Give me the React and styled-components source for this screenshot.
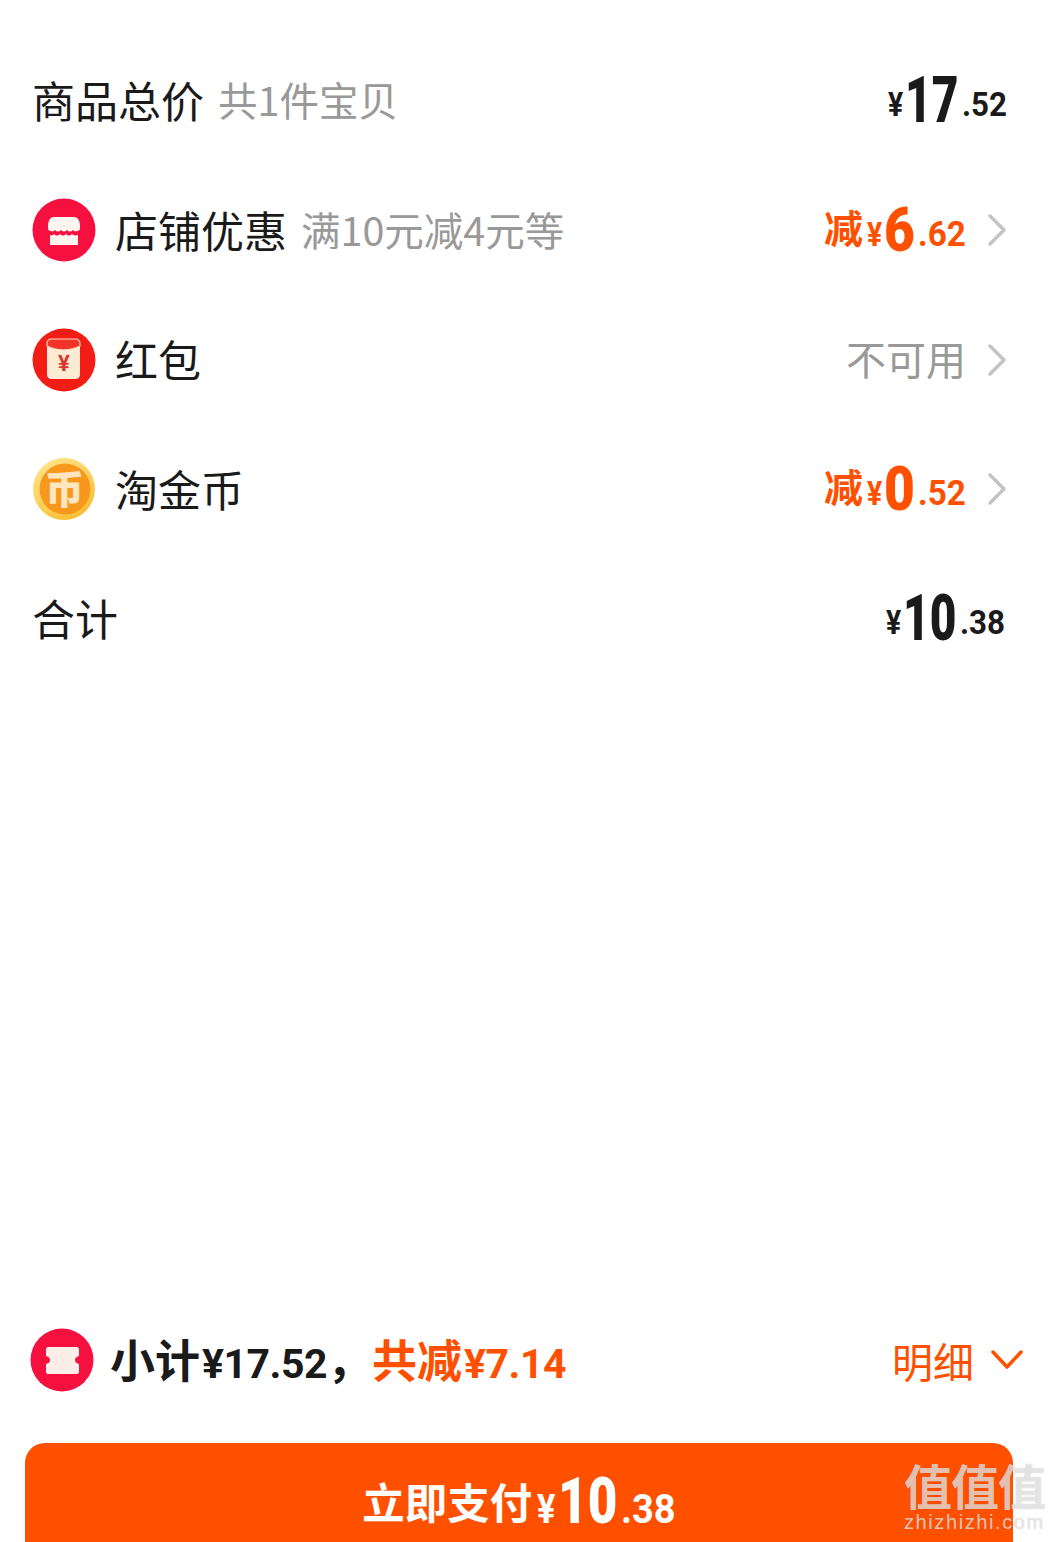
import React from 'react';
import styled, { createGlobalStyle } from 'styled-components';

const ORANGE = '#ff5000';
const INK = '#1a1a1a';
const GRAY = '#999999';
const CJK = '"Noto Sans CJK SC", "Noto Sans", sans-serif';
const NUM = 'Roboto, "Noto Sans CJK SC", sans-serif';

const GlobalStyle = createGlobalStyle`
  html, body {
    margin: 0;
    padding: 0;
    background: #fff;
    font-family: ${CJK};
  }
`;

const Page = styled.div`
  position: relative;
  width: 1055px;
  height: 1542px;
  overflow: hidden;
  display: flex;
  flex-direction: column;
  background: #fff;
`;

const List = styled.div`
  display: flex;
  flex-direction: column;
  padding: 36px 48px 0 32px;
`;

const Row = styled.div`
  height: 129.5px;
  display: flex;
  align-items: center;
  justify-content: space-between;
`;

const Left = styled.div`
  display: flex;
  align-items: center;
`;

const Right = styled.div`
  display: flex;
  align-items: center;
  margin-right: ${(p) => p.$inset || 0}px;
`;

const IconWrap = styled.div`
  width: 64px;
  height: 64px;
  margin-right: ${(p) => p.$gap || 19}px;
  flex: none;
  display: flex;
`;

const Label = styled.span`
  font-size: 43px;
  line-height: 56px;
  padding-bottom: 3px;
  color: ${INK};
`;

const Hint = styled.span`
  font-size: 39.5px;
  line-height: 56px;
  padding-bottom: 3px;
  color: ${GRAY};
  margin-left: 14px;
`;

const Muted = styled.span`
  font-size: 40px;
  line-height: 56px;
  padding-bottom: 3px;
  color: ${GRAY};
`;

const Price = styled.div`
  display: flex;
  align-items: baseline;
  font-family: ${NUM};
  font-weight: 700;
  color: ${(p) => p.$color || INK};
`;

const Minus = styled.span`
  font-family: ${CJK};
  font-weight: 700;
  font-size: 39px;
  margin-right: 4px;
  transform: translateY(-8px);
`;

const Yen = styled.span`
  display: inline-block;
  width: ${(p) => p.$width}px;
  font-size: ${(p) => p.$size}px;
  transform: translateY(${(p) => -p.$raise}px) scaleX(0.86);
  transform-origin: left center;
`;

// big narrow digits: the font has no condensed cut, so squeeze and pull the box back in
const Whole = styled.span`
  display: inline-block;
  font-size: ${(p) => p.$size}px;
  font-weight: 900;
  line-height: 1;
  transform: scaleX(${(p) => p.$squeeze});
  transform-origin: left center;
  margin-right: ${(p) => -(1 - p.$squeeze) * 0.56 * p.$digits * p.$size}px;
`;

const Cents = styled.span`
  display: inline-block;
  font-size: ${(p) => p.$size}px;
  margin-left: 3px;
  margin-right: ${(p) => -0.07 * p.$size}px;
  transform: translateY(${(p) => -p.$raise}px) scaleX(0.95);
  transform-origin: left center;
`;

const Chevron = styled.svg`
  width: 20px;
  height: 34px;
  margin-left: 21px;
  flex: none;
`;

const Spacer = styled.div`
  flex: 1;
`;

const Summary = styled.div`
  height: 64px;
  display: flex;
  align-items: center;
  justify-content: space-between;
  padding: 0 31px 0 30px;
  margin-bottom: 51px;
`;

const SummaryText = styled.span`
  font-family: ${CJK};
  font-size: 45px;
  font-weight: 700;
  line-height: 64px;
  padding-top: 2px;
  color: ${(p) => p.$color || INK};
`;

const SummaryNum = styled.span`
  font-family: ${NUM};
  font-size: 41px;
  letter-spacing: -0.5px;
  margin-left: 2px;
`;

const Detail = styled.div`
  display: flex;
  align-items: center;
  color: ${ORANGE};
  font-size: 41px;
  line-height: 56px;
`;

const DownArrow = styled.svg`
  width: 34px;
  height: 22px;
  margin-left: 16px;
`;

const PayButton = styled.div`
  height: 99px;
  box-sizing: border-box;
  padding-top: 19px;
  margin: 0 42px 0 25px;
  border-radius: 20px 20px 0 0;
  background: ${ORANGE};
  display: flex;
  align-items: center;
  justify-content: center;
  color: #fff;
  font-family: ${CJK};
  font-weight: 700;
  font-size: 42.5px;
`;

const PayLabel = styled.span`
  margin-right: 5px;
  padding-bottom: 4px;
`;

const Mark = styled.div`
  position: absolute;
  left: 904px;
  top: 1457px;
  width: 151px;
  color: rgba(255, 255, 255, 0.62);
  text-shadow: 0 0 1px rgba(120, 120, 120, 0.5);
`;

const MarkGlyphs = styled.div`
  font-family: ${CJK};
  font-weight: 700;
  font-size: 48px;
  line-height: 54px;
  letter-spacing: -1px;
`;

const MarkUrl = styled.div`
  font-family: "Liberation Sans", sans-serif;
  font-size: 20px;
  line-height: 22px;
  letter-spacing: 1.6px;
`;

const ShopIcon = () => (
  <svg width="64" height="64" viewBox="0 0 64 64">
    <circle cx="32" cy="32" r="31.5" fill="#f5103f" />
    <path d="M22 19h20c4 0 6 4 6 9v2c0 2-1 3-3 3-2 1-3 0-4-1-2 2-4 2-6 0-2 2-4 2-6 0-2 2-4 2-6 0-1 1-2 2-4 1-2 0-3-1-3-3v-2c0-5 2-9 6-9z" fill="#fff5f0" />
    <path d="M18 37c2 1 3 0 4-1 2 2 4 2 6 0 2 2 4 2 6 0 2 2 4 2 6 0 1 1 3 2 6 1v10H18z" fill="#fff5f0" />
  </svg>
);

const PacketIcon = () => (
  <svg width="64" height="64" viewBox="0 0 64 64">
    <circle cx="32" cy="32" r="31.5" fill="#f41d16" />
    <path d="M15 18c9 5 24 5 33 0v29c0 2-2 4-4 4H19c-2 0-4-2-4-4z" fill="#fdebd3" />
    <path d="M15 18v-3c0-2 2-4 4-4h25c2 0 4 2 4 4v3c-9 5-24 5-33 0z" fill="#f2332a" stroke="#fbd8c0" strokeWidth="1.2" />
    <text x="32" y="43" textAnchor="middle" fontSize="22" fontWeight="700" fontFamily="Roboto, sans-serif" fill="#d9382c">¥</text>
  </svg>
);

const CoinIcon = () => (
  <svg width="64" height="64" viewBox="0 0 64 64">
    <defs>
      <linearGradient id="coinRim" x1="0.2" y1="0" x2="0.8" y2="1">
        <stop offset="0" stopColor="#ffe48a" />
        <stop offset="1" stopColor="#f9bb2e" />
      </linearGradient>
    </defs>
    <circle cx="32" cy="32" r="31" fill="url(#coinRim)" />
    <circle cx="33" cy="32" r="25.5" fill="#f7981c" />
    <text x="32.5" y="46" textAnchor="middle" fontSize="38" fontWeight="700" fontFamily={CJK} fill="#fde6c0" stroke="#fde6c0" strokeWidth="1.2" strokeLinejoin="round">币</text>
  </svg>
);

const TicketIcon = () => (
  <svg width="64" height="64" viewBox="0 0 64 64">
    <circle cx="32" cy="32" r="31.5" fill="#f5103f" />
    <path d="M18 19h29c1 0 2 1 2 2v7c-3 1-4 2-4 4s1 3 4 4v8c0 1-1 2-2 2H18c-1 0-2-1-2-2v-8c3-1 4-2 4-4s-1-3-4-4v-7c0-1 1-2 2-2z" fill="#fbeee8" />
    <path d="M34 24l-3 5 3 5-3 5 3 3" fill="none" stroke="#fbe8e0" strokeWidth="2" />
  </svg>
);

const RightArrow = () => (
  <Chevron viewBox="0 0 20 34">
    <path d="M3 3l14 14L3 31" fill="none" stroke="#c4c4c4" strokeWidth="3.5" strokeLinecap="round" strokeLinejoin="round" />
  </Chevron>
);

const Amount = ({
  whole,
  cents,
  color,
  minus,
  size = 64,
  squeeze = 0.72,
  yen = 33,
  yenWidth = 17,
  centSize = 33,
  raise = 6,
}) => (
  <Price $color={color}>
    {minus && <Minus>减</Minus>}
    <Yen $size={yen} $width={yenWidth} $raise={raise}>¥</Yen>
    <Whole $size={size} $digits={whole.length} $squeeze={squeeze}>{whole}</Whole>
    <Cents $size={centSize} $raise={raise}>.{cents}</Cents>
  </Price>
);

const App = () => (
  <Page>
    <GlobalStyle />
    <List>
      <Row>
        <Left>
          <Label>商品总价</Label>
          <Hint>共1件宝贝</Hint>
        </Left>
        <Right>
          <Amount whole="17" cents="52" />
        </Right>
      </Row>
      <Row>
        <Left>
          <IconWrap><ShopIcon /></IconWrap>
          <Label>店铺优惠</Label>
          <Hint>满10元减4元等</Hint>
        </Left>
        <Right>
          <Amount whole="6" cents="62" color={ORANGE} minus size={62} squeeze={0.86} centSize={35} raise={5} />
          <RightArrow />
        </Right>
      </Row>
      <Row>
        <Left>
          <IconWrap><PacketIcon /></IconWrap>
          <Label>红包</Label>
        </Left>
        <Right>
          <Muted>不可用</Muted>
          <RightArrow />
        </Right>
      </Row>
      <Row>
        <Left>
          <IconWrap><CoinIcon /></IconWrap>
          <Label>淘金币</Label>
        </Left>
        <Right>
          <Amount whole="0" cents="52" color={ORANGE} minus size={62} squeeze={0.86} centSize={35} raise={5} />
          <RightArrow />
        </Right>
      </Row>
      <Row>
        <Left>
          <Label>合计</Label>
        </Left>
        <Right $inset={2}>
          <Amount whole="10" cents="38" />
        </Right>
      </Row>
    </List>
    <Spacer />
    <Summary>
      <Left>
        <IconWrap $gap={16}><TicketIcon /></IconWrap>
        <SummaryText>小计<SummaryNum>¥17.52</SummaryNum>，</SummaryText>
        <SummaryText $color={ORANGE}>共减<SummaryNum>¥7.14</SummaryNum></SummaryText>
      </Left>
      <Detail>
        明细
        <DownArrow viewBox="0 0 34 22">
          <path d="M3 3l14 15L31 3" fill="none" stroke={ORANGE} strokeWidth="3.5" strokeLinecap="round" strokeLinejoin="round" />
        </DownArrow>
      </Detail>
    </Summary>
    <PayButton>
      <PayLabel>立即支付</PayLabel>
      <Amount whole="10" cents="38" color="#fff" yen={40} yenWidth={21} size={64} squeeze={0.8} centSize={40} raise={0} />
    </PayButton>
    <Mark>
      <MarkGlyphs>值值值</MarkGlyphs>
      <MarkUrl>zhizhizhi.com</MarkUrl>
    </Mark>
  </Page>
);

export default App;
